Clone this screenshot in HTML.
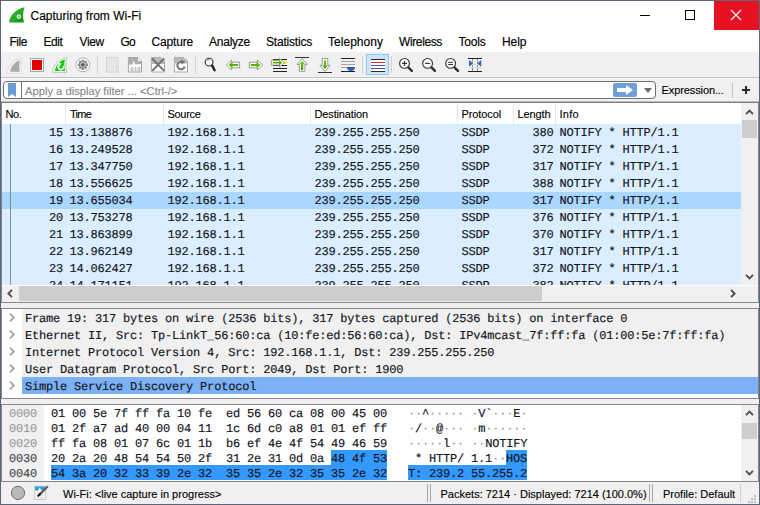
<!DOCTYPE html>
<html><head><meta charset="utf-8"><title>Capturing from Wi-Fi</title><style>
*{box-sizing:border-box;margin:0;padding:0}
html,body{width:760px;height:505px;overflow:hidden;background:#f0f0f0}
body{position:relative;font-family:"Liberation Sans",sans-serif;font-size:12px;color:#000}
.abs{position:absolute}
.t{position:absolute;white-space:pre;line-height:1;-webkit-text-stroke-width:0.12px}
.mono{font-family:"Liberation Mono",monospace;font-size:12px;letter-spacing:-0.2px;white-space:pre;position:absolute;line-height:1;color:#12141c;-webkit-text-stroke-width:0.15px;text-rendering:geometricPrecision}
.hdr{font-size:11px}
svg{position:absolute;overflow:visible}
</style></head><body>
<div class="abs" style="left:0px;top:0px;width:760px;height:505px;background:#fff;"></div>
<div class="abs" style="left:0px;top:0px;width:760px;height:1px;background:#5b6676;"></div>
<div class="abs" style="left:0px;top:0px;width:1px;height:505px;background:#5b6676;"></div>
<div class="abs" style="left:759px;top:0px;width:1px;height:505px;background:#5b6676;"></div>
<div class="abs" style="left:0px;top:504px;width:760px;height:1px;background:#5b6676;"></div>
<svg style="left:9px;top:7px" width="16" height="16" viewBox="0 0 16 16"><defs><linearGradient id="g1" x1="0" y1="0" x2="1" y2="1"><stop offset="0" stop-color="#3cc43c"/><stop offset="1" stop-color="#0f8f12"/></linearGradient></defs><path d="M0 15.6 C0.5 8.5 7 2 15.6 0.3 C13.8 5 13.6 10 15 15.6 Z" fill="url(#g1)"/><circle cx="9.8" cy="9.6" r="2.3" fill="#d9f2d9"/><circle cx="9.8" cy="9.6" r="1" fill="#49b84b"/></svg>
<div class="t" style="left:30.5px;top:10px;font-size:12px;-webkit-text-stroke-width:0.15px">Capturing from Wi-Fi</div>
<div class="abs" style="left:640px;top:15px;width:10px;height:1px;background:#000;"></div>
<div class="abs" style="left:685px;top:10px;width:10px;height:10px;background:transparent;border:1px solid #000"></div>
<div class="abs" style="left:714px;top:1px;width:45px;height:29px;background:#e81123;"></div>
<svg style="left:731px;top:10px" width="10" height="10" viewBox="0 0 10 10"><path d="M0 0L10 10M10 0L0 10" stroke="#fff" stroke-width="1.1" fill="none"/></svg>
<div class="t" style="left:9.5px;top:36px;font-size:12px;letter-spacing:-0.46px;-webkit-text-stroke-width:0.15px">File</div>
<div class="t" style="left:43.5px;top:36px;font-size:12px;letter-spacing:-0.42px;-webkit-text-stroke-width:0.15px">Edit</div>
<div class="t" style="left:79.5px;top:36px;font-size:12px;letter-spacing:-0.40px;-webkit-text-stroke-width:0.15px">View</div>
<div class="t" style="left:120.5px;top:36px;font-size:12px;letter-spacing:-0.76px;-webkit-text-stroke-width:0.15px">Go</div>
<div class="t" style="left:151.5px;top:36px;font-size:12px;letter-spacing:-0.17px;-webkit-text-stroke-width:0.15px">Capture</div>
<div class="t" style="left:209px;top:36px;font-size:12px;letter-spacing:-0.24px;-webkit-text-stroke-width:0.15px">Analyze</div>
<div class="t" style="left:266px;top:36px;font-size:12px;letter-spacing:-0.20px;-webkit-text-stroke-width:0.15px">Statistics</div>
<div class="t" style="left:328px;top:36px;font-size:12px;letter-spacing:0.03px;-webkit-text-stroke-width:0.15px">Telephony</div>
<div class="t" style="left:399px;top:36px;font-size:12px;letter-spacing:-0.38px;-webkit-text-stroke-width:0.15px">Wireless</div>
<div class="t" style="left:458.5px;top:36px;font-size:12px;letter-spacing:-0.20px;-webkit-text-stroke-width:0.15px">Tools</div>
<div class="t" style="left:502px;top:36px;font-size:12px;letter-spacing:-0.05px;-webkit-text-stroke-width:0.15px">Help</div>
<div class="abs" style="left:1px;top:52px;width:758px;height:26px;background:#f0f0f0;"></div>
<div class="abs" style="left:1px;top:78px;width:758px;height:24px;background:#f0f0f0;"></div>
<div class="abs" style="left:1px;top:77px;width:758px;height:1px;background:#c3c3c3;"></div>
<div class="abs" style="left:1px;top:78px;width:758px;height:1px;background:#fbfbfb;"></div>
<svg style="left:0;top:0" width="760" height="100" viewBox="0 0 760 100">
<defs>
<linearGradient id="gg" x1="0" y1="0" x2="0" y2="1"><stop offset="0" stop-color="#7ed321"/><stop offset="1" stop-color="#3f9a00"/></linearGradient>
</defs>
<!-- 1 start capture (disabled grey fin) -->
<path d="M7.5 73.3 C8.2 66 13.5 59.8 21.6 58.2 C20 62.8 20.2 68 21.7 73.3 Z" fill="#fbfbfb" stroke="#d6d6d6" stroke-width="0.9"/>
<path d="M10 71.8 C10.8 66.5 14.6 61.8 19.9 60.2 C18.9 64 19 68 20 71.8 Z" fill="#a9a9a9"/>
<!-- 2 stop -->
<rect x="30.5" y="58.5" width="13" height="13" fill="#fff" stroke="#a9a9a9" stroke-width="1"/>
<rect x="32" y="60" width="10" height="10" fill="#e00000"/>
<!-- 3 restart (green fin) -->
<path d="M52.4 72.4 C53.2 65.3 58.6 58.8 67 57.2 C65.3 62 65.5 67.2 66.9 72.4 Z" fill="#fafafa" stroke="#bdbdbd" stroke-width="0.9"/>
<path d="M54.8 71 C55.7 65.8 59.4 60.8 65 59.3 C64 63.2 64.1 67.2 65.2 71 Z" fill="#0ccf0c"/>
<path d="M63.2 65.8 A2.6 2.6 0 1 1 59 65.2" fill="none" stroke="#fff" stroke-width="1.6"/>
<path d="M57.4 63 L61.6 63.2 L59.4 66.4 Z" fill="#fff"/>
<!-- 4 options gear -->
<circle cx="82.9" cy="64.8" r="7" fill="#fdfdfd" stroke="#b0b0b0" stroke-width="1"/>
<g fill="#8a8a8a">
<circle cx="82.9" cy="64.8" r="3.9"/>
<g transform="translate(82.9 64.8)">
<rect x="-1.2" y="-5.1" width="2.4" height="10.2" rx="0.3"/>
<rect x="-1.2" y="-5.1" width="2.4" height="10.2" rx="0.3" transform="rotate(45)"/>
<rect x="-1.2" y="-5.1" width="2.4" height="10.2" rx="0.3" transform="rotate(90)"/>
<rect x="-1.2" y="-5.1" width="2.4" height="10.2" rx="0.3" transform="rotate(135)"/>
</g></g>
<circle cx="82.9" cy="64.8" r="2.7" fill="#d4d4d4"/>
<circle cx="82.9" cy="64.8" r="1.9" fill="#5e5e5e"/>
<!-- sep -->
<rect x="97" y="56" width="1" height="18" fill="#d3d3d3"/>
<!-- 5 open (pale) -->
<path d="M106.5 57.5 H118 V72 H106.5 Z" fill="#e6e6e6" stroke="#d2d2d2" stroke-width="1"/>
<path d="M116.5 66 H118.5 V72 H116.5 Z" fill="#ececec" stroke="#d2d2d2" stroke-width="0.8"/>
<!-- 6 save 010 -->
<path d="M128.4 57.5 H138 L141.5 61 V72 H128.4 Z" fill="#fdfdfd" stroke="#a3a3a3" stroke-width="1"/>
<path d="M128.9 58 H137.8 L141 61.2 V64 L135 64.6 L133.8 60.5 L132.5 64.6 L128.9 64.4 Z" fill="#adadad"/>
<path d="M138 57.6 V61 H141.4 Z" fill="#f4f4f4"/>
<text x="130.2" y="70.6" font-family="Liberation Mono, monospace" font-size="5.6" font-weight="bold" fill="#a8a8a8" letter-spacing="0.2">010</text>
<!-- 7 close -->
<path d="M151.4 57.5 H161 L164.5 61 V72 H151.4 Z" fill="#fdfdfd" stroke="#a9a9a9" stroke-width="1"/>
<path d="M151.9 58 H160.8 L164 61.2 V64 H151.9 Z" fill="#b9b9b9"/>
<path d="M152.6 59 L163.6 70.4 M163.6 59 L152.6 70.4" stroke="#727272" stroke-width="2" stroke-linecap="round" fill="none"/>
<!-- 8 reload -->
<path d="M174.4 57.5 H184 L187.5 61 V72 H174.4 Z" fill="#fdfdfd" stroke="#a9a9a9" stroke-width="1"/>
<path d="M174.9 58 H183.8 L187 61.2 V63.4 H174.9 Z" fill="#b9b9b9"/>
<path d="M184.6 66.6 A3.7 3.7 0 1 1 182.6 62.2" fill="none" stroke="#747474" stroke-width="2"/>
<path d="M181 59.6 L185.4 61.8 L181.6 64.4 Z" fill="#747474"/>
<!-- sep -->
<rect x="195" y="56" width="1" height="18" fill="#d3d3d3"/>
<!-- 9 find -->
<circle cx="209.1" cy="62.1" r="3.9" fill="#f6f6f6" stroke="#333" stroke-width="1.1"/>
<path d="M207 60.6 A2.2 2.2 0 0 1 209.4 59.8" fill="none" stroke="#555" stroke-width="0.7"/>
<path d="M212.2 65.6 L214.6 70.2" stroke="#222" stroke-width="2.4" stroke-linecap="round"/>
<!-- 10 back -->
<path d="M226.3 65 L231.6 60.1 V62.2 H239.6 V67.8 H231.6 V69.9 Z" fill="#fff" stroke="#8d8d8d" stroke-width="0.9" stroke-linejoin="round"/>
<path d="M228.6 65 L232.4 61.8 V63.9 H238.2 V66.1 H232.4 V68.2 Z" fill="#5ab300"/>
<!-- 11 forward -->
<path d="M262.7 65 L257.4 60.1 V62.2 H249.4 V67.8 H257.4 V69.9 Z" fill="#fff" stroke="#8d8d8d" stroke-width="0.9" stroke-linejoin="round"/>
<path d="M260.4 65 L256.6 61.8 V63.9 H250.8 V66.1 H256.6 V68.2 Z" fill="#5ab300"/>
<!-- 12 goto -->
<g fill="#222">
<rect x="273" y="59" width="14" height="1"/>
<rect x="273" y="65" width="14" height="1"/>
<rect x="273" y="68" width="14" height="1"/>
<rect x="273" y="71" width="14" height="1"/>
</g>
<rect x="283.5" y="61" width="3.5" height="3" fill="#ffe23a"/>
<path d="M284.3 62.7 L279.6 58.3 V60.3 H271.4 V65.1 H279.6 V67.1 Z" fill="#fff" stroke="#8d8d8d" stroke-width="0.9" stroke-linejoin="round"/>
<path d="M282.3 62.7 L279 59.9 V61.8 H272.9 V63.6 H279 V65.5 Z" fill="#5ab300"/>
<!-- 13 first -->
<rect x="295" y="57" width="14" height="1" fill="#333"/>
<path d="M302.1 58.6 L307.2 64.4 H304.9 V71.3 H299.3 V64.4 H297 Z" fill="#fff" stroke="#8d8d8d" stroke-width="0.9" stroke-linejoin="round"/>
<path d="M302.1 60.8 L305 64.2 H303.2 V69.9 H301 V64.2 H299.2 Z" fill="url(#gg)"/>
<!-- 14 last -->
<rect x="318" y="72" width="14" height="1" fill="#333"/>
<path d="M325 71.3 L330.1 65.4 H327.8 V58.5 H322.2 V65.4 H319.9 Z" fill="#fff" stroke="#8d8d8d" stroke-width="0.9" stroke-linejoin="round"/>
<path d="M325 69.1 L327.9 65.6 H326.1 V59.9 H323.9 V65.6 H322.1 Z" fill="url(#gg)"/>
<!-- 15 autoscroll -->
<rect x="341" y="58" width="14" height="1" fill="#222"/>
<rect x="341" y="61" width="14" height="1" fill="#a4a4a4"/>
<rect x="341" y="64" width="14" height="1" fill="#a4a4a4"/>
<rect x="341" y="67" width="7" height="1" fill="#a4a4a4"/>
<rect x="341" y="71" width="14" height="1" fill="#222"/>
<path d="M346.8 67 H355 C355 69.2 353.4 71 350.9 71 C348.4 71 346.8 69.2 346.8 67 Z" fill="#2b5fb3"/>
<!-- sep -->
<rect x="362" y="56" width="1" height="18" fill="#d3d3d3"/>
<!-- 16 colorize (checked) -->
<rect x="366.5" y="54.5" width="22" height="20" fill="#cce4f7" stroke="#93c6f0" stroke-width="1"/>
<rect x="371" y="59" width="14" height="13" fill="#fff"/>
<rect x="371" y="59" width="14" height="1" fill="#2b2b2b"/>
<rect x="371" y="62" width="14" height="1" fill="#e32222"/>
<rect x="371" y="65" width="14" height="1" fill="#2f62b5"/>
<rect x="371" y="68" width="14" height="1" fill="#6f3f86"/>
<rect x="371" y="71" width="14" height="1" fill="#2b2b2b"/>
<!-- sep -->
<rect x="391" y="56" width="1" height="18" fill="#d3d3d3"/>
<!-- 17 zoom in -->
<g stroke="#333" fill="none">
<circle cx="404.5" cy="63.4" r="4.9" fill="#fafafa" stroke-width="1.1"/>
<path d="M402 63.4 H407 M404.5 60.9 V65.9" stroke-width="1.1"/>
<path d="M408.6 67.6 L411.8 70.9" stroke-width="2.5" stroke-linecap="round"/>
<!-- 18 zoom out -->
<circle cx="427.6" cy="63.4" r="4.9" fill="#fafafa" stroke-width="1.1"/>
<path d="M425.1 63.4 H430.1" stroke-width="1.1"/>
<path d="M431.7 67.6 L434.9 70.9" stroke-width="2.5" stroke-linecap="round"/>
<!-- 19 zoom 1:1 -->
<circle cx="450.6" cy="63.4" r="4.9" fill="#fafafa" stroke-width="1.1"/>
<path d="M448.2 62.4 H453 M448.2 64.5 H453" stroke-width="1"/>
<path d="M454.7 67.6 L457.9 70.9" stroke-width="2.5" stroke-linecap="round"/>
</g>
<!-- 20 resize columns -->
<rect x="468" y="58" width="14" height="1" fill="#222"/>
<rect x="468" y="71" width="14" height="1" fill="#222"/>
<rect x="472" y="59" width="1" height="12" fill="#8f8f8f"/>
<rect x="477" y="59" width="1" height="12" fill="#8f8f8f"/>
<rect x="469" y="61" width="12" height="1" fill="#d8d8d8"/>
<rect x="469" y="64" width="12" height="1" fill="#d8d8d8"/>
<rect x="469" y="67" width="12" height="1" fill="#d8d8d8"/>
<path d="M469 60 L473 63.4 L469 66.8 Z" fill="#2e6bc0"/>
<path d="M481.3 60 L477.3 63.4 L481.3 66.8 Z" fill="#2e6bc0"/>
</svg>

<div class="abs" style="left:3px;top:81px;width:653px;height:18px;background:#fff;border:1px solid #6e6e6e;border-radius:4px"></div>
<div class="abs" style="left:21px;top:82px;width:1px;height:16px;background:#7a7a7a;"></div>
<svg style="left:8px;top:83px" width="8" height="14" viewBox="0 0 8 14"><path d="M0 0H8V14L4 11L0 14Z" fill="#6b9bd6"/></svg>
<div class="t" style="left:25px;top:86px;font-size:11.2px;color:#868686">Apply a display filter ... &lt;Ctrl-/&gt;</div>
<div class="abs" style="left:613px;top:83px;width:24px;height:14px;background:#6f9fd8;border-radius:2px"></div>
<svg style="left:617px;top:85px" width="16" height="10" viewBox="0 0 16 10"><path d="M0 3H9V0L16 5L9 10V7H0Z" fill="#fff"/></svg>
<svg style="left:644px;top:88px" width="8" height="5" viewBox="0 0 8 5"><path d="M0 0H8L4 5Z" fill="#6a6a6a"/></svg>
<div class="t" style="left:661.5px;top:85px;font-size:11px;letter-spacing:-0.1px">Expression...</div>
<div class="abs" style="left:732px;top:83px;width:1px;height:15px;background:#c4c4c4;"></div>
<div class="abs" style="left:742px;top:89px;width:8px;height:2px;background:#2a2a2a;"></div>
<div class="abs" style="left:745px;top:86px;width:2px;height:8px;background:#2a2a2a;"></div>
<div class="abs" style="left:1px;top:101px;width:758px;height:202px;background:#fff;border:1px solid #848689"></div>
<div class="abs" style="left:1px;top:101px;width:758px;height:1px;background:#bcbcbc;"></div>
<div class="abs" style="left:1px;top:102px;width:758px;height:1px;background:#7c7e82;"></div>
<div class="t" style="left:5.5px;top:109px;font-size:11px;letter-spacing:-0.41px">No.</div>
<div class="t" style="left:70px;top:109px;font-size:11px;letter-spacing:-0.76px">Time</div>
<div class="t" style="left:167.5px;top:109px;font-size:11px;letter-spacing:-0.31px">Source</div>
<div class="t" style="left:314.5px;top:109px;font-size:11px;letter-spacing:-0.14px">Destination</div>
<div class="t" style="left:461.5px;top:109px;font-size:11px;letter-spacing:-0.11px">Protocol</div>
<div class="t" style="left:517.5px;top:109px;font-size:11px;letter-spacing:-0.11px">Length</div>
<div class="t" style="left:559.5px;top:109px;font-size:11px;letter-spacing:0.29px">Info</div>
<div class="abs" style="left:65px;top:103px;width:1px;height:21px;background:#e5e5e5;"></div>
<div class="abs" style="left:163px;top:103px;width:1px;height:21px;background:#e5e5e5;"></div>
<div class="abs" style="left:310px;top:103px;width:1px;height:21px;background:#e5e5e5;"></div>
<div class="abs" style="left:457px;top:103px;width:1px;height:21px;background:#e5e5e5;"></div>
<div class="abs" style="left:513px;top:103px;width:1px;height:21px;background:#e5e5e5;"></div>
<div class="abs" style="left:555px;top:103px;width:1px;height:21px;background:#e5e5e5;"></div>
<div class="abs" style="left:2px;top:124px;width:739px;height:161px;overflow:hidden;background:#daeeff">
<div class="mono" style="right:678px;top:3px">15</div>
<div class="mono" style="left:67.5px;top:3px">13.138876</div>
<div class="mono" style="left:165.5px;top:3px">192.168.1.1</div>
<div class="mono" style="left:312.5px;top:3px">239.255.255.250</div>
<div class="mono" style="left:459.5px;top:3px">SSDP</div>
<div class="mono" style="right:187.5px;top:3px">380</div>
<div class="mono" style="left:557.5px;top:3px">NOTIFY * HTTP/1.1</div>
<div class="mono" style="right:678px;top:20px">16</div>
<div class="mono" style="left:67.5px;top:20px">13.249528</div>
<div class="mono" style="left:165.5px;top:20px">192.168.1.1</div>
<div class="mono" style="left:312.5px;top:20px">239.255.255.250</div>
<div class="mono" style="left:459.5px;top:20px">SSDP</div>
<div class="mono" style="right:187.5px;top:20px">372</div>
<div class="mono" style="left:557.5px;top:20px">NOTIFY * HTTP/1.1</div>
<div class="mono" style="right:678px;top:37px">17</div>
<div class="mono" style="left:67.5px;top:37px">13.347750</div>
<div class="mono" style="left:165.5px;top:37px">192.168.1.1</div>
<div class="mono" style="left:312.5px;top:37px">239.255.255.250</div>
<div class="mono" style="left:459.5px;top:37px">SSDP</div>
<div class="mono" style="right:187.5px;top:37px">317</div>
<div class="mono" style="left:557.5px;top:37px">NOTIFY * HTTP/1.1</div>
<div class="mono" style="right:678px;top:54px">18</div>
<div class="mono" style="left:67.5px;top:54px">13.556625</div>
<div class="mono" style="left:165.5px;top:54px">192.168.1.1</div>
<div class="mono" style="left:312.5px;top:54px">239.255.255.250</div>
<div class="mono" style="left:459.5px;top:54px">SSDP</div>
<div class="mono" style="right:187.5px;top:54px">388</div>
<div class="mono" style="left:557.5px;top:54px">NOTIFY * HTTP/1.1</div>
<div class="abs" style="left:0;top:68px;width:739px;height:17px;background:#aad7ff"></div>
<div class="mono" style="right:678px;top:71px">19</div>
<div class="mono" style="left:67.5px;top:71px">13.655034</div>
<div class="mono" style="left:165.5px;top:71px">192.168.1.1</div>
<div class="mono" style="left:312.5px;top:71px">239.255.255.250</div>
<div class="mono" style="left:459.5px;top:71px">SSDP</div>
<div class="mono" style="right:187.5px;top:71px">317</div>
<div class="mono" style="left:557.5px;top:71px">NOTIFY * HTTP/1.1</div>
<div class="mono" style="right:678px;top:88px">20</div>
<div class="mono" style="left:67.5px;top:88px">13.753278</div>
<div class="mono" style="left:165.5px;top:88px">192.168.1.1</div>
<div class="mono" style="left:312.5px;top:88px">239.255.255.250</div>
<div class="mono" style="left:459.5px;top:88px">SSDP</div>
<div class="mono" style="right:187.5px;top:88px">376</div>
<div class="mono" style="left:557.5px;top:88px">NOTIFY * HTTP/1.1</div>
<div class="mono" style="right:678px;top:105px">21</div>
<div class="mono" style="left:67.5px;top:105px">13.863899</div>
<div class="mono" style="left:165.5px;top:105px">192.168.1.1</div>
<div class="mono" style="left:312.5px;top:105px">239.255.255.250</div>
<div class="mono" style="left:459.5px;top:105px">SSDP</div>
<div class="mono" style="right:187.5px;top:105px">370</div>
<div class="mono" style="left:557.5px;top:105px">NOTIFY * HTTP/1.1</div>
<div class="mono" style="right:678px;top:122px">22</div>
<div class="mono" style="left:67.5px;top:122px">13.962149</div>
<div class="mono" style="left:165.5px;top:122px">192.168.1.1</div>
<div class="mono" style="left:312.5px;top:122px">239.255.255.250</div>
<div class="mono" style="left:459.5px;top:122px">SSDP</div>
<div class="mono" style="right:187.5px;top:122px">317</div>
<div class="mono" style="left:557.5px;top:122px">NOTIFY * HTTP/1.1</div>
<div class="mono" style="right:678px;top:139px">23</div>
<div class="mono" style="left:67.5px;top:139px">14.062427</div>
<div class="mono" style="left:165.5px;top:139px">192.168.1.1</div>
<div class="mono" style="left:312.5px;top:139px">239.255.255.250</div>
<div class="mono" style="left:459.5px;top:139px">SSDP</div>
<div class="mono" style="right:187.5px;top:139px">372</div>
<div class="mono" style="left:557.5px;top:139px">NOTIFY * HTTP/1.1</div>
<div class="mono" style="right:678px;top:156px">24</div>
<div class="mono" style="left:67.5px;top:156px">14.171151</div>
<div class="mono" style="left:165.5px;top:156px">192.168.1.1</div>
<div class="mono" style="left:312.5px;top:156px">239.255.255.250</div>
<div class="mono" style="left:459.5px;top:156px">SSDP</div>
<div class="mono" style="right:187.5px;top:156px">382</div>
<div class="mono" style="left:557.5px;top:156px">NOTIFY * HTTP/1.1</div>
<div class="abs" style="left:8px;top:0;width:1px;height:161px;background:#8a8f96"></div>
</div>
<div class="abs" style="left:741px;top:103px;width:17px;height:182px;background:#f0f0f0;"></div>
<div class="abs" style="left:742px;top:120px;width:15px;height:18px;background:#cdcdcd;"></div>
<svg style="left:745px;top:109px" width="9" height="6" viewBox="0 0 9 6"><path d="M1 5.2L4.5 1.7L8 5.2" stroke="#4d4d4d" stroke-width="1.9" fill="none"/></svg>
<svg style="left:745px;top:274px" width="9" height="6" viewBox="0 0 9 6"><path d="M1 0.8L4.5 4.3L8 0.8" stroke="#4d4d4d" stroke-width="1.9" fill="none"/></svg>
<div class="abs" style="left:2px;top:285px;width:740px;height:1px;background:#fff;"></div>
<div class="abs" style="left:2px;top:286px;width:756px;height:16px;background:#f0f0f0;"></div>
<div class="abs" style="left:19px;top:286px;width:523px;height:15px;background:#cdcdcd;"></div>
<svg style="left:7px;top:289px" width="6" height="9" viewBox="0 0 6 9"><path d="M5 0.9L1.4 4.5L5 8.1" stroke="#4d4d4d" stroke-width="1.9" fill="none"/></svg>
<svg style="left:730px;top:289px" width="6" height="9" viewBox="0 0 6 9"><path d="M1 0.9L4.6 4.5L1 8.1" stroke="#4d4d4d" stroke-width="1.9" fill="none"/></svg>
<div class="abs" style="left:1px;top:303px;width:758px;height:5px;background:#f0f0f0;"></div>
<div class="abs" style="left:1px;top:399px;width:758px;height:5px;background:#f0f0f0;"></div>
<div class="abs" style="left:1px;top:308px;width:758px;height:91px;background:#fff;border:1px solid #848689"></div>
<div class="abs" style="left:22px;top:309px;width:736px;height:17px;background:#f0f0f0;"></div>
<div class="mono" style="left:25.1px;top:313px;">Frame 19: 317 bytes on wire (2536 bits), 317 bytes captured (2536 bits) on interface 0</div>
<svg style="left:9px;top:313px" width="6" height="9" viewBox="0 0 6 9"><path d="M1 0.7L4.8 4.5L1 8.3" stroke="#a3a3a3" stroke-width="1.8" fill="none"/></svg>
<div class="abs" style="left:22px;top:326px;width:736px;height:17px;background:#f0f0f0;"></div>
<div class="mono" style="left:25.1px;top:330px;">Ethernet II, Src: Tp-LinkT_56:60:ca (10:fe:ed:56:60:ca), Dst: IPv4mcast_7f:ff:fa (01:00:5e:7f:ff:fa)</div>
<svg style="left:9px;top:330px" width="6" height="9" viewBox="0 0 6 9"><path d="M1 0.7L4.8 4.5L1 8.3" stroke="#a3a3a3" stroke-width="1.8" fill="none"/></svg>
<div class="abs" style="left:22px;top:343px;width:736px;height:17px;background:#f0f0f0;"></div>
<div class="mono" style="left:25.1px;top:347px;">Internet Protocol Version 4, Src: 192.168.1.1, Dst: 239.255.255.250</div>
<svg style="left:9px;top:347px" width="6" height="9" viewBox="0 0 6 9"><path d="M1 0.7L4.8 4.5L1 8.3" stroke="#a3a3a3" stroke-width="1.8" fill="none"/></svg>
<div class="abs" style="left:22px;top:360px;width:736px;height:17px;background:#f0f0f0;"></div>
<div class="mono" style="left:25.1px;top:364px;">User Datagram Protocol, Src Port: 2049, Dst Port: 1900</div>
<svg style="left:9px;top:364px" width="6" height="9" viewBox="0 0 6 9"><path d="M1 0.7L4.8 4.5L1 8.3" stroke="#a3a3a3" stroke-width="1.8" fill="none"/></svg>
<div class="abs" style="left:22px;top:377px;width:736px;height:17px;background:#7db1f5;"></div>
<div class="mono" style="left:25.1px;top:381px;">Simple Service Discovery Protocol</div>
<svg style="left:9px;top:381px" width="6" height="9" viewBox="0 0 6 9"><path d="M1 0.7L4.8 4.5L1 8.3" stroke="#a3a3a3" stroke-width="1.8" fill="none"/></svg>
<div class="abs" style="left:1px;top:404px;width:758px;height:78px;background:#fff;border:1px solid #848689"></div>
<div class="abs" style="left:2px;top:405px;width:42px;height:76px;background:#f0f0f0;"></div>
<div class="abs" style="left:331px;top:450px;width:56px;height:15px;background:#3399ff;"></div>
<div class="abs" style="left:506px;top:450px;width:21px;height:15px;background:#3399ff;"></div>
<div class="abs" style="left:51px;top:465px;width:336px;height:15px;background:#3399ff;"></div>
<div class="abs" style="left:408px;top:465px;width:119px;height:15px;background:#3399ff;"></div>
<div class="mono" style="left:9px;top:408px;color:#9c9c9c">0000</div>
<div class="mono" style="left:51px;top:408px;">01 00 5e 7f ff fa 10 fe  ed 56 60 ca 08 00 45 00</div>
<div class="mono" style="left:408px;top:408px"><span style="color:#989898">·</span><span style="color:#989898">·</span>^<span style="color:#989898">·</span><span style="color:#989898">·</span><span style="color:#989898">·</span><span style="color:#989898">·</span><span style="color:#989898">·</span> <span style="color:#989898">·</span>V`<span style="color:#989898">·</span><span style="color:#989898">·</span><span style="color:#989898">·</span>E<span style="color:#989898">·</span></div>
<div class="mono" style="left:9px;top:423px;color:#9c9c9c">0010</div>
<div class="mono" style="left:51px;top:423px;">01 2f a7 ad 40 00 04 11  1c 6d c0 a8 01 01 ef ff</div>
<div class="mono" style="left:408px;top:423px"><span style="color:#989898">·</span>/<span style="color:#989898">·</span><span style="color:#989898">·</span>@<span style="color:#989898">·</span><span style="color:#989898">·</span><span style="color:#989898">·</span> <span style="color:#989898">·</span>m<span style="color:#989898">·</span><span style="color:#989898">·</span><span style="color:#989898">·</span><span style="color:#989898">·</span><span style="color:#989898">·</span><span style="color:#989898">·</span></div>
<div class="mono" style="left:9px;top:438px;color:#9c9c9c">0020</div>
<div class="mono" style="left:51px;top:438px;">ff fa 08 01 07 6c 01 1b  b6 ef 4e 4f 54 49 46 59</div>
<div class="mono" style="left:408px;top:438px"><span style="color:#989898">·</span><span style="color:#989898">·</span><span style="color:#989898">·</span><span style="color:#989898">·</span><span style="color:#989898">·</span>l<span style="color:#989898">·</span><span style="color:#989898">·</span> <span style="color:#989898">·</span><span style="color:#989898">·</span>NOTIFY</div>
<div class="mono" style="left:9px;top:453px;color:#4a4a4a">0030</div>
<div class="mono" style="left:51px;top:453px;">20 2a 20 48 54 54 50 2f  31 2e 31 0d 0a 48 4f 53</div>
<div class="mono" style="left:408px;top:453px"> * HTTP/ 1.1<span style="color:#989898">·</span><span style="color:#989898">·</span>HOS</div>
<div class="mono" style="left:9px;top:468px;color:#4a4a4a">0040</div>
<div class="mono" style="left:51px;top:468px;">54 3a 20 32 33 39 2e 32  35 35 2e 32 35 35 2e 32</div>
<div class="mono" style="left:408px;top:468px">T: 239.2 55.255.2</div>
<div class="abs" style="left:741px;top:405px;width:17px;height:76px;background:#f0f0f0;"></div>
<div class="abs" style="left:742px;top:423px;width:15px;height:16px;background:#cdcdcd;"></div>
<svg style="left:745px;top:410px" width="9" height="6" viewBox="0 0 9 6"><path d="M1 5.2L4.5 1.7L8 5.2" stroke="#4d4d4d" stroke-width="1.9" fill="none"/></svg>
<svg style="left:745px;top:470px" width="9" height="6" viewBox="0 0 9 6"><path d="M1 0.8L4.5 4.3L8 0.8" stroke="#4d4d4d" stroke-width="1.9" fill="none"/></svg>
<div class="abs" style="left:1px;top:482px;width:758px;height:22px;background:#f0f0f0;"></div>
<svg style="left:10px;top:485px" width="16" height="16" viewBox="0 0 16 16"><circle cx="8" cy="7.9" r="6.6" fill="#b9b9b9" stroke="#6e6e6e" stroke-width="1"/></svg>
<svg style="left:34px;top:485px" width="16" height="16" viewBox="0 0 16 16"><rect x="0.7" y="1.2" width="10.6" height="13.3" fill="#fafafa" stroke="#c2c2c2" stroke-width="0.9"/><path d="M1.1 1.6H10.9V5.2L7.5 5.6L5.6 2.6L3.8 5.8L1.1 5.4Z" fill="#2b9fd9"/><path d="M2.5 8.5H9.5M2.5 10.5H9.5M2.5 12.5H9.5" stroke="#cfcfcf" stroke-width="0.8"/><path d="M13.2 2L5.4 9.6" stroke="#5c5c5c" stroke-width="2.3" stroke-linecap="round"/><path d="M5.9 9.1L4.3 10.7" stroke="#111" stroke-width="2" stroke-linecap="round"/></svg>
<div class="t" style="left:63px;top:488.5px;font-size:11px">Wi-Fi: &lt;live capture in progress&gt;</div>
<div class="t" style="left:440.5px;top:488.5px;font-size:11px">Packets: 7214 · Displayed: 7214 (100.0%)</div>
<div class="t" style="left:663px;top:488.5px;font-size:11px">Profile: Default</div>
<div class="abs" style="left:427px;top:484px;width:1px;height:18px;background:#a8a8a8;"></div>
<div class="abs" style="left:430px;top:484px;width:1px;height:18px;background:#a8a8a8;"></div>
<div class="abs" style="left:649px;top:484px;width:1px;height:18px;background:#a8a8a8;"></div>
<div class="abs" style="left:652px;top:484px;width:1px;height:18px;background:#a8a8a8;"></div>
<div class="abs" style="left:740px;top:484px;width:1px;height:18px;background:#cfcfcf;"></div>
<div class="abs" style="left:754px;top:495px;width:2px;height:2px;background:#bcbcbc;"></div>
<div class="abs" style="left:751px;top:498px;width:2px;height:2px;background:#bcbcbc;"></div>
<div class="abs" style="left:754px;top:498px;width:2px;height:2px;background:#bcbcbc;"></div>
<div class="abs" style="left:748px;top:501px;width:2px;height:2px;background:#bcbcbc;"></div>
<div class="abs" style="left:751px;top:501px;width:2px;height:2px;background:#bcbcbc;"></div>
<div class="abs" style="left:754px;top:501px;width:2px;height:2px;background:#bcbcbc;"></div>
</body></html>
